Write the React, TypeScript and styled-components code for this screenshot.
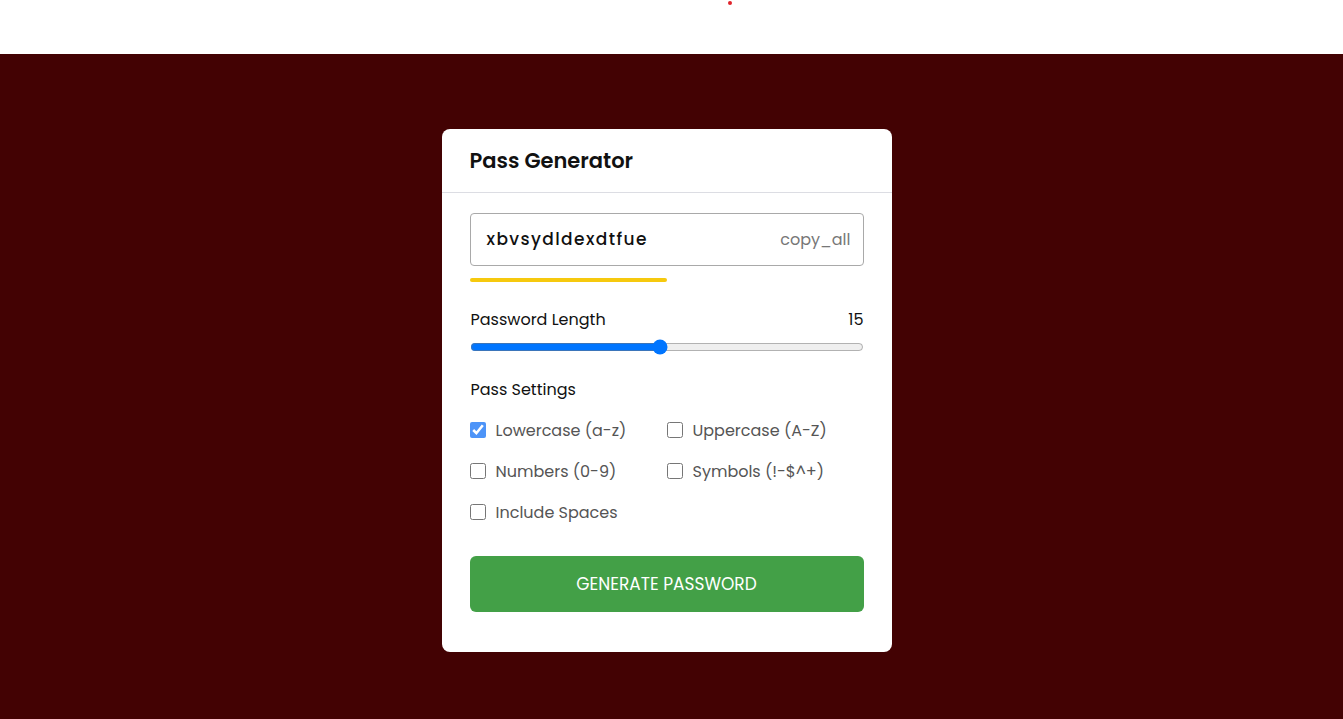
import React, { useState } from "react";
import styled, { createGlobalStyle } from "styled-components";

const Global = createGlobalStyle`
  html, body { margin: 0; padding: 0; }
  body { font-family: "Poppins", "Lato", "Noto Sans", sans-serif; background: #fff; }
`;

const Page = styled.div`
  display: flex;
  flex-direction: column;
  min-height: 719px;
`;

const TopBar = styled.header`
  height: 54px;
  background: #fff;
  position: relative;
`;

const Dot = styled.span`
  position: absolute;
  left: 728px;
  top: 1px;
  width: 4px;
  height: 4px;
  border-radius: 50%;
  background: #e0232b;
`;

const Stage = styled.main`
  flex: 1;
  background: #430203;
  display: flex;
  justify-content: center;
  align-items: flex-start;
  padding: 75px 10px 0 0;
`;

const Card = styled.section`
  width: 450px;
  background: #fff;
  border-radius: 8px;
  padding-bottom: 40px;
`;

const CardHeader = styled.div`
  height: 63px;
  border-bottom: 1px solid #dcdde3;
  display: flex;
  align-items: center;
  padding: 0 28px;
`;

const Title = styled.h1`
  margin: 0;
  font-size: 21px;
  font-weight: 600;
  color: #111;
`;

const Body = styled.div`
  padding: 20px 28px 0;
  display: flex;
  flex-direction: column;
`;

const Output = styled.div`
  height: 53px;
  box-sizing: border-box;
  border: 1px solid #a9a9a9;
  border-radius: 4px;
  display: flex;
  align-items: center;
  justify-content: space-between;
  padding: 0 12px 0 16px;
`;

const PassText = styled.span`
  font-size: 17px;
  letter-spacing: 1.4px;
  color: #111;
  font-weight: 500;
  padding-bottom: 2px;
`;

const CopyBtn = styled.span`
  font-size: 16px;
  color: #777;
`;

const Strength = styled.div`
  margin-top: 12px;
  height: 4px;
  width: 197px;
  border-radius: 2px;
  background: #f6c90e;
`;

const RowBetween = styled.div`
  display: flex;
  justify-content: space-between;
  align-items: center;
  margin-top: 26px;
  padding-left: 1px;
  font-size: 16px;
  line-height: 24px;
  color: #111;
`;

const Range = styled.input`
  width: 394px;
  margin: 7px 0 0;
  height: 16px;
`;

const SectionLabel = styled.div`
  margin-top: 23px;
  padding-left: 1px;
  font-size: 16px;
  line-height: 24px;
  color: #111;
`;

const Grid = styled.div`
  display: grid;
  grid-template-columns: 197px 197px;
  row-gap: 19px;
  margin-top: 17px;
`;

const Check = styled.label`
  display: flex;
  align-items: center;
  gap: 10px;
  font-size: 16px;
  color: #555;
  height: 22px;
  input {
    width: 16px;
    height: 16px;
    margin: 0;
    accent-color: #4d94f8;
  }
`;

const Generate = styled.button`
  margin-top: 33px;
  height: 56px;
  border: none;
  border-radius: 6px;
  background: #43a047;
  color: #fff;
  font-family: inherit;
  font-size: 17px;
  font-weight: 400;
  text-transform: uppercase;
  cursor: pointer;
`;

export default function App() {
  const [len, setLen] = useState(15);
  const [opts, setOpts] = useState({ lower: true, upper: false, num: false, sym: false, space: false });
  const toggle = (k: keyof typeof opts) => setOpts({ ...opts, [k]: !opts[k] });
  return (
    <Page>
      <Global />
      <TopBar>
        <Dot />
      </TopBar>
      <Stage>
        <Card>
          <CardHeader>
            <Title>Pass Generator</Title>
          </CardHeader>
          <Body>
            <Output>
              <PassText>xbvsydldexdtfue</PassText>
              <CopyBtn>copy_all</CopyBtn>
            </Output>
            <Strength />
            <RowBetween>
              <span>Password Length</span>
              <span>{len}</span>
            </RowBetween>
            <Range type="range" min={1} max={30} value={len} onChange={(e) => setLen(Number(e.target.value))} />
            <SectionLabel>Pass Settings</SectionLabel>
            <Grid>
              <Check><input type="checkbox" checked={opts.lower} onChange={() => toggle("lower")} />Lowercase (a-z)</Check>
              <Check><input type="checkbox" checked={opts.upper} onChange={() => toggle("upper")} />Uppercase (A-Z)</Check>
              <Check><input type="checkbox" checked={opts.num} onChange={() => toggle("num")} />Numbers (0-9)</Check>
              <Check><input type="checkbox" checked={opts.sym} onChange={() => toggle("sym")} />Symbols (!-$^+)</Check>
              <Check><input type="checkbox" checked={opts.space} onChange={() => toggle("space")} />Include Spaces</Check>
            </Grid>
            <Generate>Generate Password</Generate>
          </Body>
        </Card>
      </Stage>
    </Page>
  );
}
